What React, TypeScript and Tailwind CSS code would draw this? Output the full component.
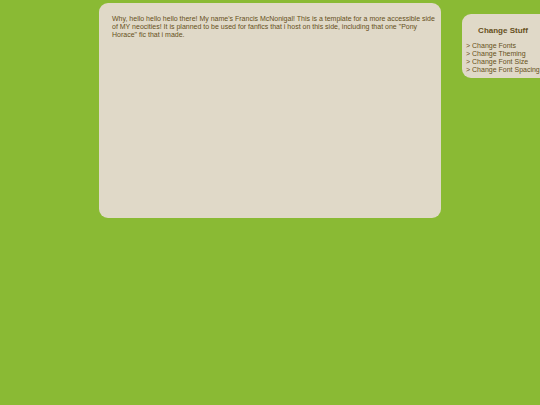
const options = ["Change Fonts", "Change Theming", "Change Font Size", "Change Font Spacing"]

const SidePanel = () => {
    return (
        <aside className="col-start-3 mt-[14px] ml-[21px] self-start rounded-l-[9px] bg-[#e0d9c8] pt-3 pb-1 pl-1">
            <h2 className="text-center text-[8px] leading-[10px] font-bold">Change Stuff</h2>
            <ul className="mt-[6px]">
                {options.map((option) => (
                    <li key={option} className="flex">
                        <button type="button" className="cursor-pointer text-left whitespace-nowrap">
                            &gt; {option}
                        </button>
                    </li>
                ))}
            </ul>
        </aside>
    )
}

const App = () => {
    return (
        <div className="grid min-h-screen grid-cols-[99px_1fr_99px] overflow-x-hidden bg-[#8aba34] font-['Liberation_Sans',Arial,sans-serif] text-[7px] leading-[8px] text-[#665020]">
            <main className="col-start-2 mt-[3px] min-h-[215px] self-start rounded-[9px] bg-[#e0d9c8] py-3 pr-1 pl-[13px]">
                <p>
                    Why, hello hello hello there! My name's Francis McNonigal! This is a template for a more accessible side
                    of MY neocities! It is planned to be used for fanfics that i host on this side, including that one "Pony
                    Horace" fic that i made.
                </p>
            </main>
            <SidePanel />
        </div>
    )
}

export default App
